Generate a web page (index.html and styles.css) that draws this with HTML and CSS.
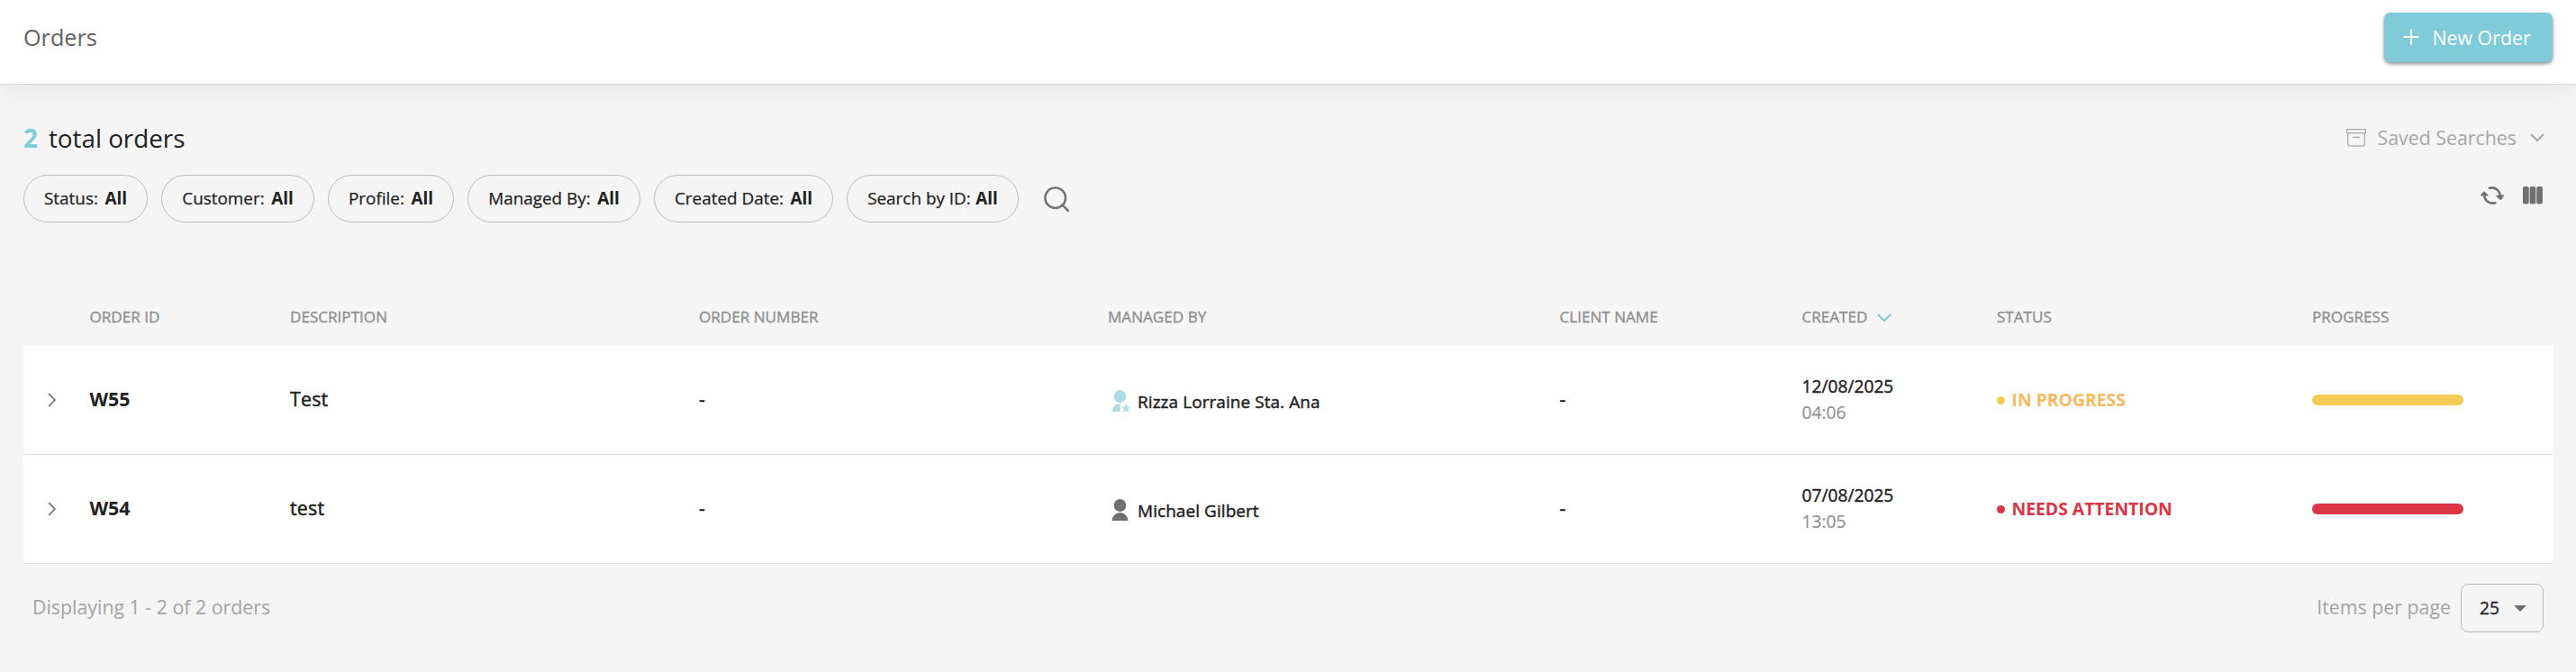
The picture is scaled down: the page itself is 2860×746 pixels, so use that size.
FILE: index.html
```html
<!DOCTYPE html>
<html lang="en">
<head>
<meta charset="utf-8">
<title>Orders</title>
<link rel="stylesheet" href="styles.css">
</head>
<body>
<header class="topbar">
  <h1 class="page-title">Orders</h1>
  <button class="new-order">
    <svg class="icon-plus" viewBox="0 0 18 18" width="18" height="18"><path d="M9 0.500V17.500M0.500 9H17.500"/></svg>
    <span>New Order</span>
  </button>
</header>
<main class="content">
  <section class="summary">
    <p class="total"><b class="total-count">2</b><span>total orders</span></p>
    <div class="saved">
      <svg class="icon-archive" viewBox="0 0 22 20" width="22" height="20"><path d="M0.500 0.700h21v4h-21zM1.800 4.700V16.500q0 2.700 2.700 2.700h13q2.700 0 2.700-2.700V4.700M7 9.300h8"/></svg>
      <span>Saved Searches</span>
      <svg class="icon-down" viewBox="0 0 16 10" width="16" height="10"><path d="M1 1l7 7 7-7"/></svg>
    </div>
  </section>
  <section class="toolbar">
    <div class="filters">
      <button class="chip chip-status">Status: <b>All</b></button>
      <button class="chip chip-customer">Customer: <b>All</b></button>
      <button class="chip chip-profile">Profile: <b>All</b></button>
      <button class="chip chip-manager">Managed By: <b>All</b></button>
      <button class="chip chip-date">Created Date: <b>All</b></button>
      <button class="chip chip-search">Search by ID: <b>All</b></button>
      <svg class="icon-search" viewBox="0 0 28 28" width="28" height="28"><circle cx="12.700" cy="12.700" r="11.300"/><path d="M20.800 20.800L26.800 26.800"/></svg>
    </div>
    <div class="tools">
      <svg class="icon-refresh" viewBox="0 0 26 20" width="26" height="20"><path class="arc" d="M10 1.700C16 0.300 21.500 4 21.800 11M16.300 18.300C10 19.700 4.300 16 4.200 9"/><path class="head" d="M18.200 10.600L22.200 14.200L25.200 10.200ZM0.800 9.800L3.800 6.300L7.800 9.800Z"/></svg>
      <svg class="icon-columns" viewBox="0 0 22 20" width="22" height="20"><rect x="0" y="0" width="6.700" height="19.500" rx="2"/><rect x="7.600" y="0" width="6.700" height="19.500" rx="2"/><rect x="15.200" y="0" width="6.700" height="19.500" rx="2"/></svg>
    </div>
  </section>
  <section class="table">
    <div class="row head-row">
      <span></span><span>ORDER ID</span><span>DESCRIPTION</span><span>ORDER NUMBER</span><span>MANAGED BY</span><span>CLIENT NAME</span>
      <span class="sorted">CREATED <svg class="icon-sort" viewBox="0 0 16 10" width="16" height="10"><path d="M1 1l7 7 7-7"/></svg></span>
      <span>STATUS</span><span>PROGRESS</span>
    </div>
    <div class="row body-row">
      <svg class="icon-expand" viewBox="0 0 10 16" width="10" height="16"><path d="M1 1l7 7-7 7"/></svg>
      <b class="order-id">W55</b><span class="cell">Test</span><span class="cell">-</span>
      <span class="manager">
        <svg class="icon-user owner" viewBox="0 0 22 30" width="22" height="30"><ellipse cx="9.500" cy="8" rx="6.800" ry="7"/><path d="M0.500 25C1 19.500 4.800 16.300 9.500 16V25z"/><path d="M16.300 15.800l1.500 3.700 3.700.2-2.900 2.500 1 4-3.300-2.200-3.300 2.200 1-4-2.900-2.500 3.700-.2z"/></svg>
        <span class="name">Rizza Lorraine Sta. Ana</span>
      </span>
      <span class="cell">-</span>
      <span class="created"><span class="date">12/08/2025</span><span class="time">04:06</span></span>
      <span class="status progressing"><i class="dot"></i><span class="status-label">IN PROGRESS</span></span>
      <span class="bar bar-yellow"></span>
    </div>
    <div class="row body-row">
      <svg class="icon-expand" viewBox="0 0 10 16" width="10" height="16"><path d="M1 1l7 7-7 7"/></svg>
      <b class="order-id">W54</b><span class="cell">test</span><span class="cell">-</span>
      <span class="manager">
        <svg class="icon-user" viewBox="0 0 22 30" width="22" height="30"><ellipse cx="9.500" cy="8" rx="6.800" ry="7"/><path d="M0.500 25C1 19.500 5 16 9.500 16S18 19.500 18.500 25z"/></svg>
        <span class="name">Michael Gilbert</span>
      </span>
      <span class="cell">-</span>
      <span class="created"><span class="date">07/08/2025</span><span class="time">13:05</span></span>
      <span class="status attention"><i class="dot"></i><span class="status-label">NEEDS ATTENTION</span></span>
      <span class="bar bar-red"></span>
    </div>
  </section>
  <footer class="pager">
    <span class="pager-text">Displaying 1 - 2 of 2 orders</span>
    <div class="per-page">
      <span class="pager-text">Items per page</span>
      <button class="select"><span class="select-value">25</span><i class="caret"></i></button>
    </div>
  </footer>
</main>
</body>
</html>
```
FILE: styles.css
```css
* { box-sizing: border-box; }
body {
  margin: 0;
  min-height: 746px;
  background: #f5f5f5;
  color: #212121;
  font-family: "Open Sans", sans-serif;
  font-size: 21.330px;
}
button { font: inherit; color: inherit; background: none; white-space: nowrap; }
svg { display: block; flex: none; fill: none; }
.topbar {
  height: 94px;
  padding: 14px 26px 24px;
  display: flex;
  justify-content: space-between;
  background: #fff;
  border-bottom: 1px solid #d4d4d4;
  box-shadow: 0 14px 24px -4px rgba(0, 0, 0, .05);
}
.page-title { margin: 0; font-size: 25.200px; font-weight: 400; line-height: 55px; color: #616161; }
.new-order {
  width: 187px;
  height: 55px;
  padding: 0 0 1px 21px;
  display: flex;
  align-items: center;
  gap: 14.500px;
  border: 0;
  border-radius: 7px;
  background: #80cbd9;
  color: #fff;
  box-shadow: 0 2px 4px rgba(0, 0, 0, .45);
}
.icon-plus { stroke: #fff; stroke-width: 1.800; }
.content { padding: 0 26px; }
.summary { height: 100px; padding-top: 40px; display: flex; justify-content: space-between; }
.total { margin: 0; display: flex; gap: 12px; font-size: 27.800px; line-height: 38px; }
.total-count { color: #80cbd9; }
.saved { height: 38px; display: flex; align-items: center; color: #a6a6a6; padding-right: 9px; }
.saved span { margin: 0 15px 0 13px; padding-bottom: 1px; }
.icon-archive { stroke: #a6a6a6; stroke-width: 1.200; }
.icon-down { stroke: #a6a6a6; stroke-width: 2; }
.toolbar { height: 53px; display: flex; justify-content: space-between; }
.filters { display: flex; align-items: center; gap: 15px; }
.chip {
  height: 53px;
  padding: 0 0 2px;
  display: flex;
  align-items: center;
  justify-content: center;
  gap: 7.500px;
  border: 1px solid #bdbdbd;
  border-radius: 27px;
  font-size: 18.900px;
  -webkit-text-stroke: .25px currentColor;
}
.chip b { -webkit-text-stroke: 0; }
.chip-status { width: 138px; }
.chip-customer { width: 170px; }
.chip-profile { width: 140px; }
.chip-manager { width: 192px; }
.chip-date { width: 199px; }
.chip-search { width: 191px; gap: 5.500px; }
.icon-search { margin-left: 13px; stroke: #707070; stroke-width: 2.400; stroke-linecap: round; }
.tools { display: flex; gap: 21px; padding: 13px 11px 0 0; }
.icon-refresh .arc { stroke: #707070; stroke-width: 2.600; stroke-linecap: round; }
.icon-refresh .head { fill: #707070; stroke: #707070; stroke-width: 1.600; stroke-linejoin: round; }
.icon-columns { fill: #707070; }
.table { padding-top: 73px; }
.row {
  display: grid;
  grid-template-columns: 73.500px 222.500px 454px 454px 501.500px 269px 216.500px 350px 1fr;
  align-items: center;
}
.head-row {
  height: 64px;
  padding-bottom: 2px;
  font-size: 17.100px;
  color: #8f8f8f;
  -webkit-text-stroke: .35px currentColor;
}
.sorted { display: flex; align-items: center; gap: 10.500px; }
.icon-sort { stroke: #80cbd9; stroke-width: 2; margin-top: 3px; }
.body-row { height: 121px; background: #fff; border-bottom: 1px solid #dedede; }
.icon-expand { margin: 0 0 1px 27px; stroke: #808080; stroke-width: 1.800; }
.order-id { font-weight: 700; padding-bottom: 3px; }
.cell { padding-bottom: 3px; letter-spacing: .010em; -webkit-text-stroke: .5px currentColor; }
.manager { display: flex; align-items: center; gap: 7px; padding: 5px 0 0 4px; }
.name { padding-bottom: 1px; font-size: 18.970px; letter-spacing: .080px; -webkit-text-stroke: .45px currentColor; }
.icon-user { fill: #6f6f6f; }
.icon-user.owner { fill: #acdde6; }
.created { display: grid; padding-bottom: 2px; font-size: 19.200px; line-height: 29px; }
.date { -webkit-text-stroke: .4px currentColor; }
.time { color: #919191; -webkit-text-stroke: .2px currentColor; }
.status { display: flex; align-items: center; gap: 7.500px; font-size: 19.330px; font-weight: 700; }
.status-label { padding-bottom: 2px; }
.dot { width: 9px; height: 9px; border-radius: 50%; }
.progressing { color: #f5b95f; }
.progressing .dot { background: #f4cc53; }
.attention { color: #dc3545; }
.attention .dot { background: #dc3545; }
.bar { width: 168px; height: 12px; border-radius: 6px; }
.bar-yellow { background: #f4cc53; }
.bar-red { background: #dc3545; }
.pager { padding: 22px 10px 0; display: flex; align-items: center; justify-content: space-between; color: #a3a3a3; }
.pager-text { padding-bottom: 3px; }
.per-page { display: flex; align-items: center; gap: 11px; }
.select {
  width: 92px;
  height: 54px;
  padding: 0 18.500px 0 20px;
  display: flex;
  align-items: center;
  justify-content: space-between;
  border: 1px solid #b8b8b8;
  border-radius: 8px;
  color: #212121;
  font-size: 19.200px;
}
.select-value { padding-bottom: 1px; -webkit-text-stroke: .3px currentColor; }
.caret { border: 7px solid transparent; border-top-color: #707070; border-bottom: 0; }
```
